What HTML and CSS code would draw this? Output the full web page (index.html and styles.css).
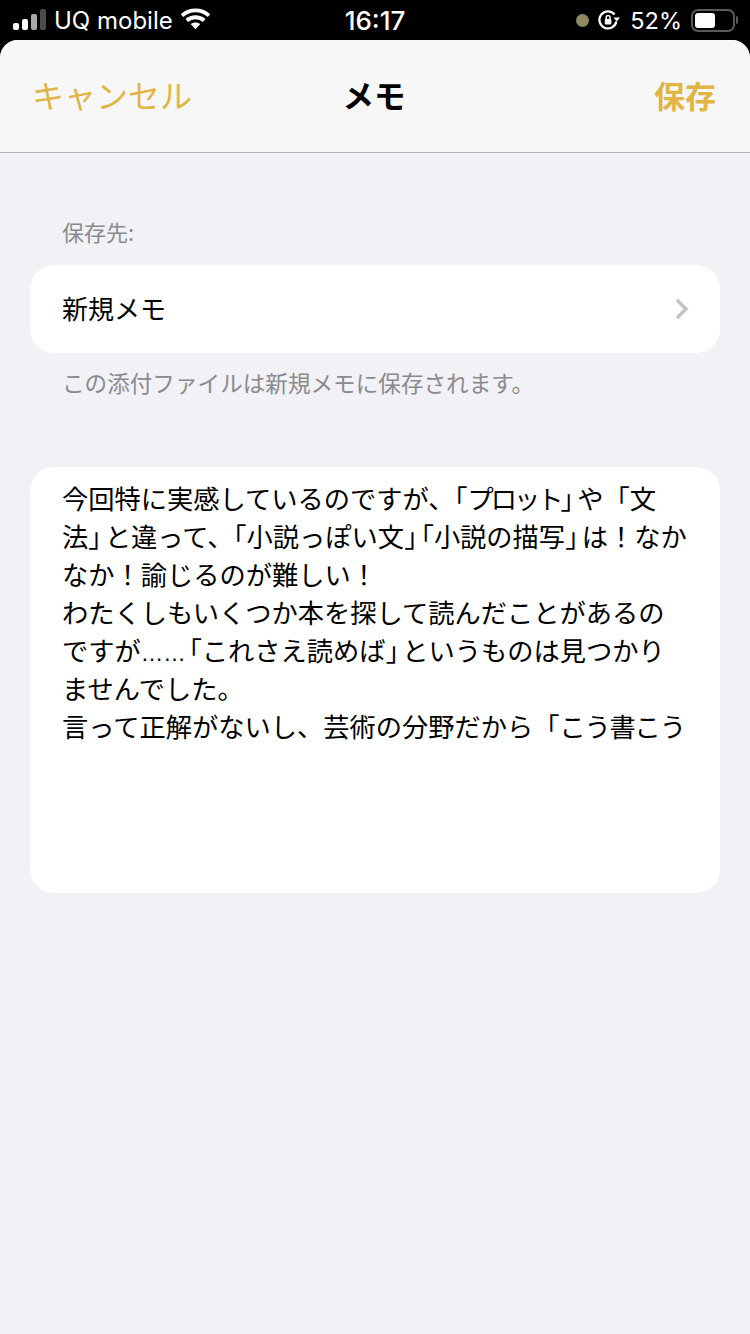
FILE: index.html
```html
<!DOCTYPE html>
<html lang="ja">
<head>
<meta charset="utf-8">
<title>メモ</title>
<link rel="stylesheet" href="styles.css">
</head>
<body>
<div class="status">
  <div class="status-left">
    <svg class="signal" width="34" height="22" viewBox="0 0 34 22">
      <rect class="on" x="0" y="14" width="6" height="7" rx="2"/>
      <rect class="on" x="9" y="10" width="6" height="11" rx="2"/>
      <rect class="mid" x="18" y="5" width="6" height="16" rx="2"/>
      <rect class="dim" x="27" y="0" width="6" height="21" rx="2"/>
    </svg>
    <span class="carrier">UQ mobile</span>
    <svg class="wifi" width="29" height="22" viewBox="0 0 30 22">
      <path d="M1 7.500C9 .2 21 .2 29 7.500" class="arc"/>
      <path d="M6 12.500c5-4.400 13-4.400 18 0" class="arc"/>
      <path d="M15 21.500l-5-5.200c2.900-2.300 7.100-2.300 10 0z" class="dot"/>
    </svg>
  </div>
  <div class="clock">16:17</div>
  <div class="status-right">
    <span class="cam-dot"></span>
    <svg class="lock" width="22" height="22" viewBox="0 0 22 22">
      <path d="M16.500 5.500A8.500 8.500 0 1 0 18.300 12.500" class="ring"/>
      <path d="M15.500 8.500h6.500l-3.200 4z" class="fill"/>
      <rect class="fill" x="6.800" y="10" width="6.600" height="5.500" rx="1"/>
      <path d="M8.200 10.500V8.500a1.900 1.900 0 0 1 3.800 0v2" class="shackle"/>
    </svg>
    <span class="battery-pct">52%</span>
    <span class="battery"><span class="battery-fill"></span></span>
    <span class="battery-cap"></span>
  </div>
</div>
<main class="sheet">
  <header class="nav">
    <span class="nav-cancel">キャンセル</span>
    <h1 class="nav-title">メモ</h1>
    <span class="nav-save">保存</span>
  </header>
  <section class="content">
    <p class="section-label">保存先:</p>
    <div class="card row">
      <span class="row-label">新規メモ</span>
      <svg class="chevron" width="16" height="22" viewBox="0 0 16 22"><path d="M3 2l9 9-9 9"/></svg>
    </div>
    <p class="section-note">この添付ファイルは新規メモに保存されます。</p>
    <div class="card body-card">
      <p class="body-text">今回特に実感しているのですが、「<span class="tight">プロット</span><span class="close">」</span>や「文<br>法<span class="close">」</span>と違って、「小説っぽい文<span class="close">」</span><span class="halt">「</span>小説の描写<span class="close">」</span>は！なか<br>なか！諭じるのが難しい！<br>わたくしもいくつか本を探して読んだことがあるの<br>ですが<span class="ellipsis">……</span><span class="halt">「</span>これさえ読めば<span class="close">」</span>というものは見つかり<br>ませんでした。<br>言って正解がないし、芸術の分野だから「<span class="snug">こう書こう</span></p>
    </div>
  </section>
</main>
</body>
</html>
```
FILE: styles.css
```css
* { box-sizing: border-box; }
html, body { margin: 0; padding: 0; }
body {
  width: 750px;
  height: 1334px;
  overflow: hidden;
  background: #000;
  font-family: "Noto Sans CJK JP", "Noto Sans", sans-serif;
  color: #000;
}
.status {
  height: 40px;
  display: grid;
  grid-template-columns: 1fr auto 1fr;
  align-items: center;
  color: #fff;
  padding: 0 12px 0 13px;
  font-family: Inter, "Noto Sans", sans-serif;
}
.status-left { display: flex; align-items: center; }
.signal { margin-right: 7px; margin-top: -1px; }
.signal .on { fill: #fff; }
.signal .mid { fill: #a9a9a9; }
.signal .dim { fill: #4c4c4c; }
.carrier { font-size: 24px; letter-spacing: 0; }
.wifi { margin-left: 8px; margin-top: -2px; }
.wifi .arc { fill: none; stroke: #fff; stroke-width: 4; }
.wifi .dot { fill: #fff; }
.clock { font-size: 26px; font-weight: 500; margin-left: -1px; }
.status-right { display: flex; align-items: center; justify-content: flex-end; }
.cam-dot { width: 13px; height: 13px; border-radius: 50%; background: #8f8a62; margin-right: 9px; }
.lock { margin-right: 10px; }
.lock .ring { fill: none; stroke: #fff; stroke-width: 2.300; }
.lock .fill { fill: #fff; }
.lock .shackle { fill: none; stroke: #fff; stroke-width: 1.500; }
.battery-pct { font-size: 23.500px; margin-right: 9px; }
.battery {
  width: 44px; height: 23px;
  border: 2px solid #5a5a5a;
  border-radius: 7px;
  padding: 2px;
  display: flex;
}
.battery-fill { width: 20px; background: #fff; border-radius: 3px; }
.battery-cap { width: 2px; height: 8px; background: #5a5a5a; margin-left: 1px; border-radius: 0 2px 2px 0; }
.sheet {
  height: 1294px;
  background: #f1f1f6;
  border-radius: 18px 18px 0 0;
  overflow: hidden;
}
.nav {
  height: 113px;
  background: #f7f7f7;
  border-bottom: 1px solid #b2b2b2;
  display: flex;
  align-items: center;
  justify-content: space-between;
  padding: 0 34px 4px 32px;
  font-size: 32px;
  color: #e0b544;
  position: relative;
}
.nav-cancel { font-weight: 400; }
.nav-save { font-weight: 700; font-size: 31px; }
.nav-title {
  position: absolute;
  left: 0; right: 0;
  text-align: center;
  margin: 0 2px 0 0;
  font-size: 31.500px;
  font-weight: 700;
  color: #000;
}
.content { padding: 0 30px; }
.section-label {
  margin: 62px 0 18px;
  padding-left: 32px;
  font-size: 22px;
  line-height: 32px;
  color: #8a8a8e;
}
.card { background: #fff; border-radius: 24px; }
.row {
  height: 88px;
  display: flex;
  align-items: center;
  justify-content: space-between;
  padding: 0 32px;
  font-size: 26px;
}
.row-label { margin-top: -3px; }
.chevron { margin-right: -2px; }
.chevron path { fill: none; stroke: #c4c4c7; stroke-width: 3.500; }
.section-note {
  margin: 14px 0 68px;
  padding-left: 32px;
  font-size: 22.600px;
  line-height: 32px;
  color: #8a8a8e;
}
.body-card { height: 426px; padding: 12px 32px; }
.body-text {
  margin: 0;
  font-size: 26.250px;
  line-height: 38px;
  white-space: nowrap;
}
.halt { font-feature-settings: "halt"; }
.close { font-feature-settings: "halt"; margin-right: 3.500px; }
.tight { letter-spacing: -3px; }
.snug { letter-spacing: -1.200px; }
.ellipsis {
  font-family: "Liberation Sans", sans-serif;
  font-size: 22.500px;
  line-height: 1;
  margin: 0 3px 0 0;
}
```
